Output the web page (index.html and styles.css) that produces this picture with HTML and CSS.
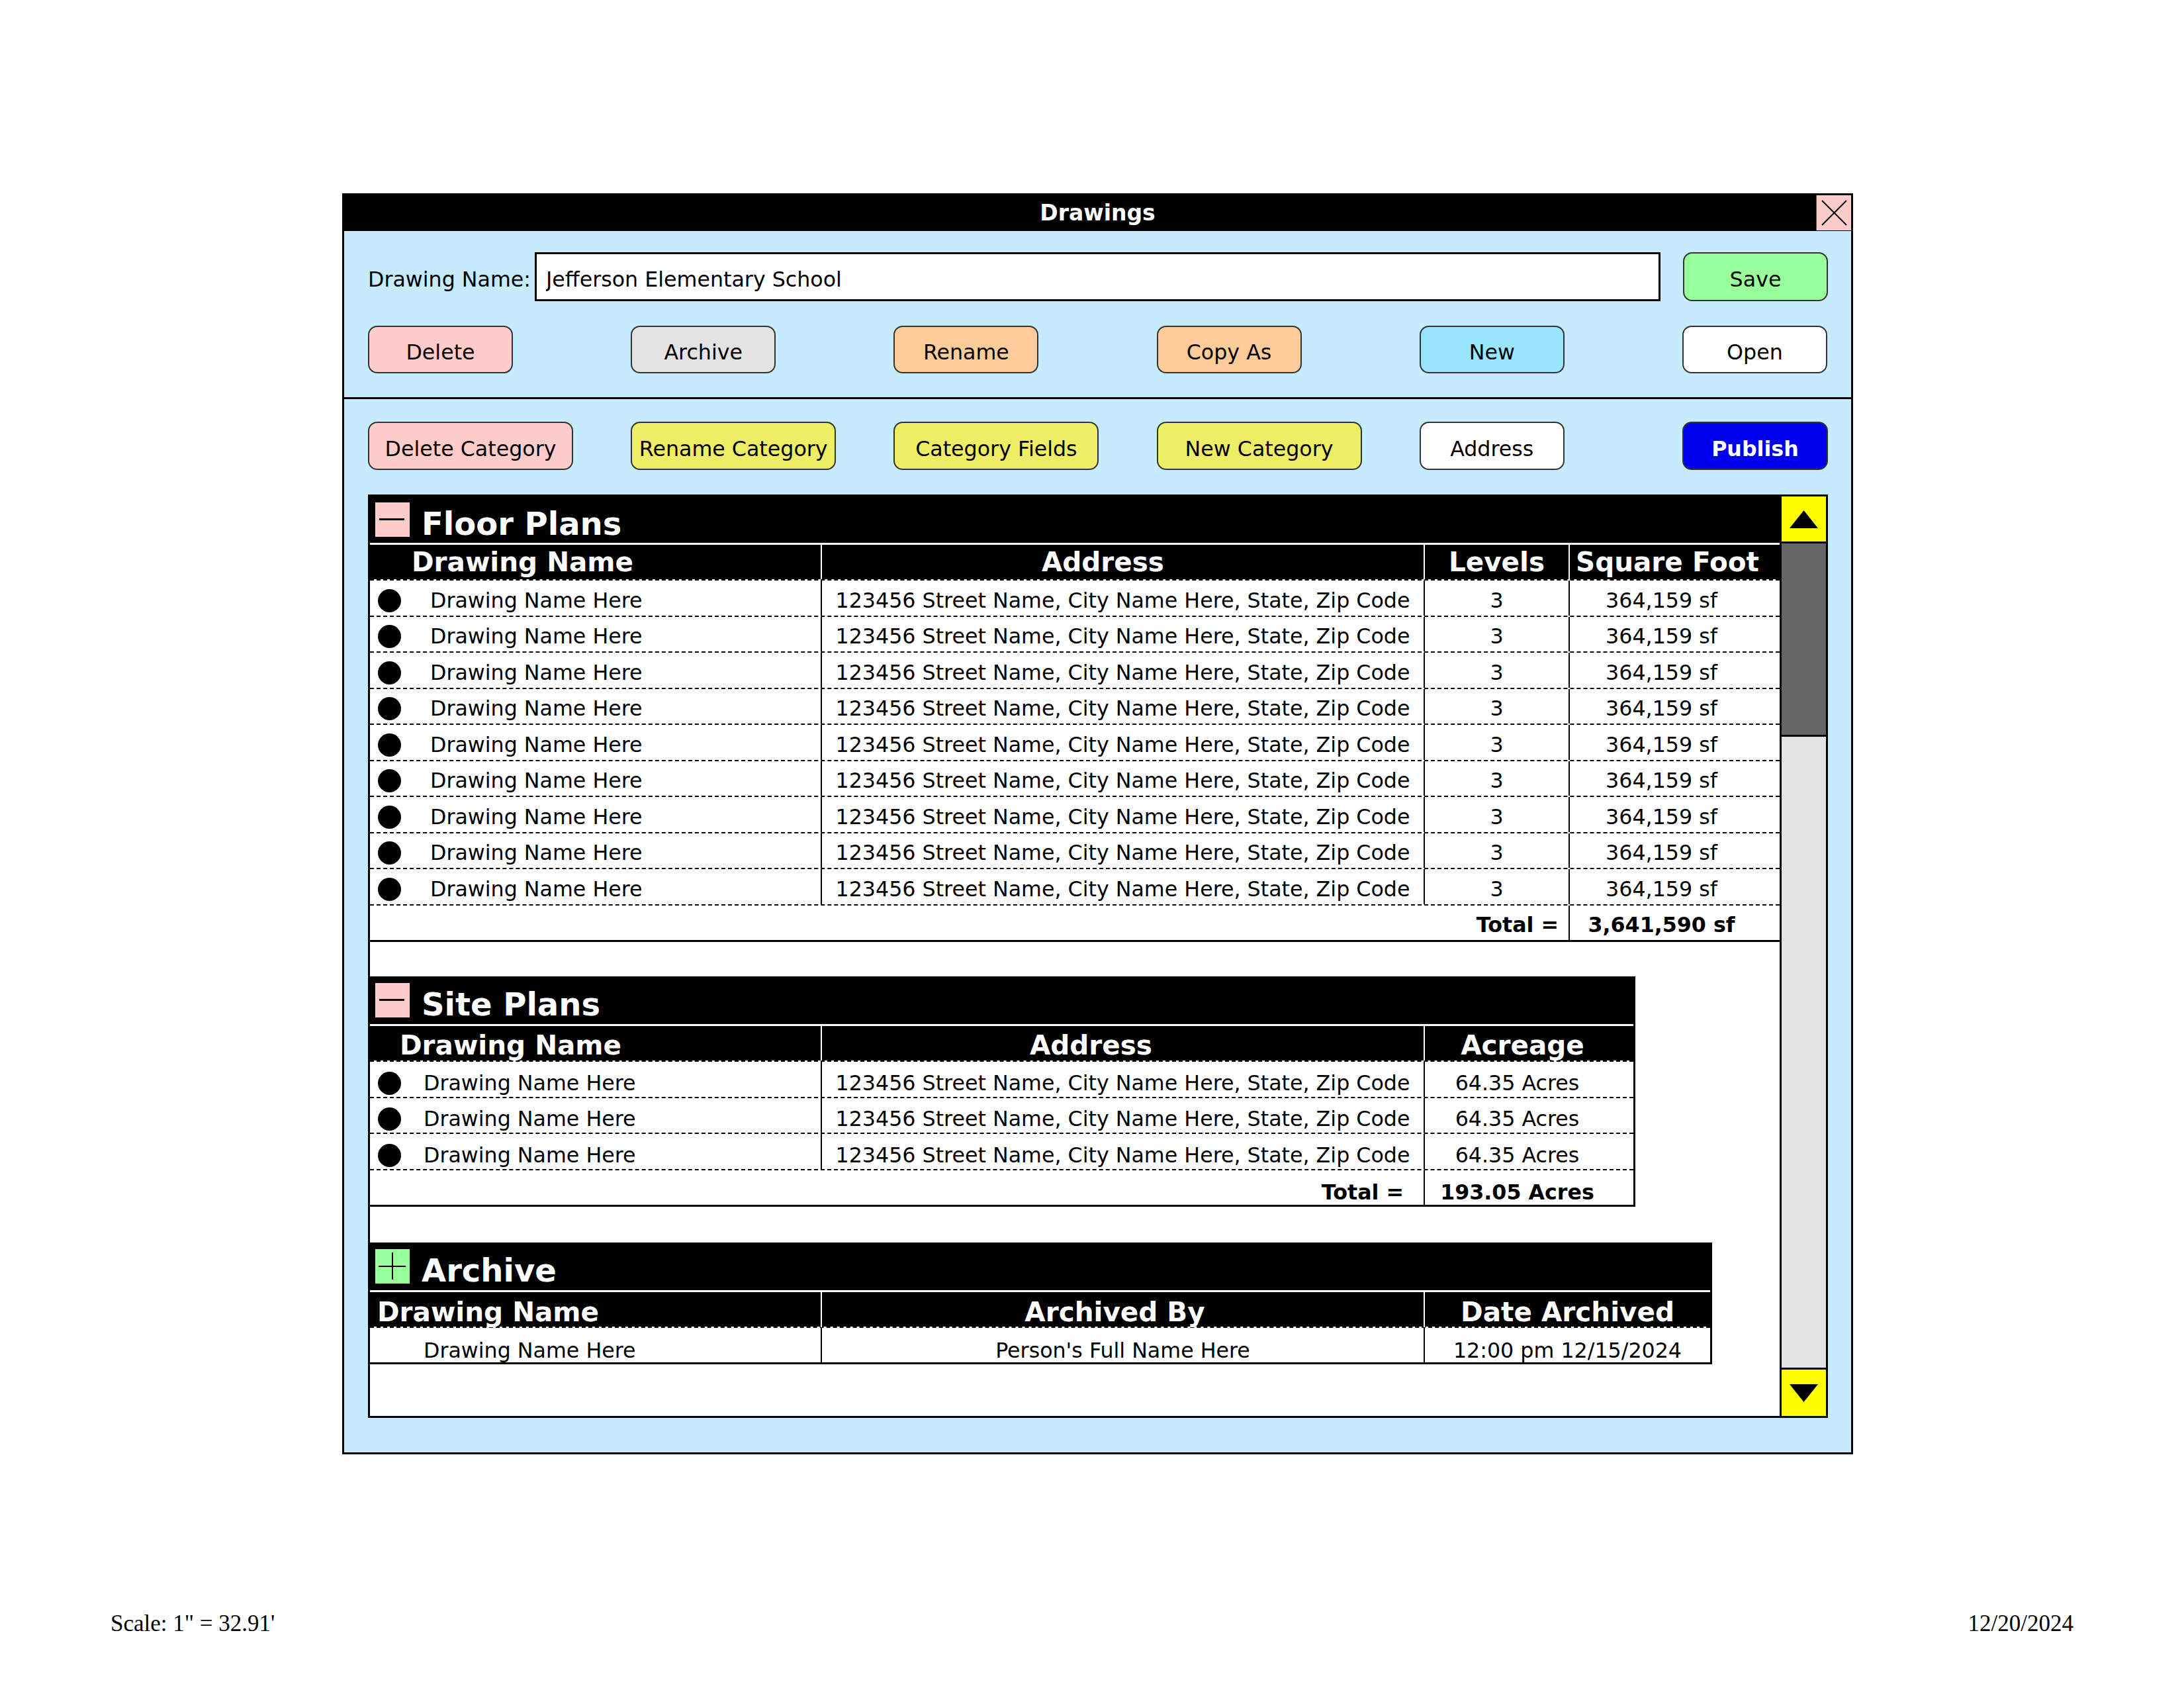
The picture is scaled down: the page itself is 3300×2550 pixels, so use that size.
FILE: index.html
```html
<!DOCTYPE html>
<html>
<head>
  <meta charset="UTF-8">
  <meta name="viewport" content="width=device-width, initial-scale=1.0">
  <title>Drawings</title>
  <link rel="stylesheet" href="styles.css">
</head>
<body>

<div class="sheet">
  <div class="window">
    <div class="titlebar">
      <span></span>
      <span class="titlebar__text">Drawings</span>
      <button class="titlebar__close" aria-label="Close">
        <svg width="53" height="53" viewBox="0 0 53 53"><path d="M8 8 L45 45 M45 8 L8 45" stroke="#000" stroke-width="2" fill="none"/></svg>
      </button>
    </div>

    <div class="toolbar">
      <div class="name-row">
        <label class="name-row__label" for="drawing-name">Drawing Name:</label>
        <input class="name-row__input" id="drawing-name" type="text" value="Jefferson Elementary School">
        <button class="btn btn--green name-row__save">Save</button>
      </div>
      <div class="btn-row">
        <button class="btn btn--pink">Delete</button>
        <button class="btn btn--grey">Archive</button>
        <button class="btn btn--orange">Rename</button>
        <button class="btn btn--orange">Copy As</button>
        <button class="btn btn--blue">New</button>
        <button class="btn btn--white">Open</button>
      </div>
    </div>

    <div class="toolbar toolbar--lower">
      <div class="btn-row">
        <button class="btn btn--wide btn--pink">Delete Category</button>
        <button class="btn btn--wide btn--yellow">Rename Category</button>
        <button class="btn btn--wide btn--yellow">Category Fields</button>
        <button class="btn btn--wide btn--yellow">New Category</button>
        <button class="btn btn--white">Address</button>
        <button class="btn btn--publish">Publish</button>
      </div>

      <div class="panel">
        <div class="panel__body">

          <section class="cat cat--floor">
            <div class="cat__title">
              <svg class="cat__toggle" viewBox="0 0 52 52"><rect width="52" height="52" fill="#ffcccc"/><path d="M6 25.5 H44" stroke="#000" stroke-width="3"/></svg>
              <span class="cat__name">Floor Plans</span>
            </div>
            <div class="cat__table">
              <div class="trow trow--head">
                <div class="cell cell--head-name">Drawing Name</div>
                <div class="cell cell--addr-head">Address</div>
                <div class="cell">Levels</div>
                <div class="cell cell--sf-head">Square Foot</div>
              </div>
              <div class="trow">
                <div class="cell cell--name"><span class="dot"></span>Drawing Name Here</div>
                <div class="cell">123456 Street Name, City Name Here, State, Zip Code</div>
                <div class="cell">3</div>
                <div class="cell cell--sf">364,159 sf</div>
              </div>
              <div class="trow">
                <div class="cell cell--name"><span class="dot"></span>Drawing Name Here</div>
                <div class="cell">123456 Street Name, City Name Here, State, Zip Code</div>
                <div class="cell">3</div>
                <div class="cell cell--sf">364,159 sf</div>
              </div>
              <div class="trow">
                <div class="cell cell--name"><span class="dot"></span>Drawing Name Here</div>
                <div class="cell">123456 Street Name, City Name Here, State, Zip Code</div>
                <div class="cell">3</div>
                <div class="cell cell--sf">364,159 sf</div>
              </div>
              <div class="trow">
                <div class="cell cell--name"><span class="dot"></span>Drawing Name Here</div>
                <div class="cell">123456 Street Name, City Name Here, State, Zip Code</div>
                <div class="cell">3</div>
                <div class="cell cell--sf">364,159 sf</div>
              </div>
              <div class="trow">
                <div class="cell cell--name"><span class="dot"></span>Drawing Name Here</div>
                <div class="cell">123456 Street Name, City Name Here, State, Zip Code</div>
                <div class="cell">3</div>
                <div class="cell cell--sf">364,159 sf</div>
              </div>
              <div class="trow">
                <div class="cell cell--name"><span class="dot"></span>Drawing Name Here</div>
                <div class="cell">123456 Street Name, City Name Here, State, Zip Code</div>
                <div class="cell">3</div>
                <div class="cell cell--sf">364,159 sf</div>
              </div>
              <div class="trow">
                <div class="cell cell--name"><span class="dot"></span>Drawing Name Here</div>
                <div class="cell">123456 Street Name, City Name Here, State, Zip Code</div>
                <div class="cell">3</div>
                <div class="cell cell--sf">364,159 sf</div>
              </div>
              <div class="trow">
                <div class="cell cell--name"><span class="dot"></span>Drawing Name Here</div>
                <div class="cell">123456 Street Name, City Name Here, State, Zip Code</div>
                <div class="cell">3</div>
                <div class="cell cell--sf">364,159 sf</div>
              </div>
              <div class="trow">
                <div class="cell cell--name"><span class="dot"></span>Drawing Name Here</div>
                <div class="cell">123456 Street Name, City Name Here, State, Zip Code</div>
                <div class="cell">3</div>
                <div class="cell cell--sf">364,159 sf</div>
              </div>
              <div class="trow trow--total">
                <div class="cell cell--total-label">Total =</div>
                <div class="cell cell--sf">3,641,590 sf</div>
              </div>
            </div>
          </section>

          <section class="cat cat--site">
            <div class="cat__title">
              <svg class="cat__toggle" viewBox="0 0 52 52"><rect width="52" height="52" fill="#ffcccc"/><path d="M6 25.5 H44" stroke="#000" stroke-width="3"/></svg>
              <span class="cat__name">Site Plans</span>
            </div>
            <div class="cat__table">
              <div class="trow trow--head">
                <div class="cell cell--head-name">Drawing Name</div>
                <div class="cell cell--addr-head">Address</div>
                <div class="cell cell--acre-head">Acreage</div>
              </div>
              <div class="trow">
                <div class="cell cell--name"><span class="dot"></span>Drawing Name Here</div>
                <div class="cell">123456 Street Name, City Name Here, State, Zip Code</div>
                <div class="cell cell--acre">64.35 Acres</div>
              </div>
              <div class="trow">
                <div class="cell cell--name"><span class="dot"></span>Drawing Name Here</div>
                <div class="cell">123456 Street Name, City Name Here, State, Zip Code</div>
                <div class="cell cell--acre">64.35 Acres</div>
              </div>
              <div class="trow">
                <div class="cell cell--name"><span class="dot"></span>Drawing Name Here</div>
                <div class="cell">123456 Street Name, City Name Here, State, Zip Code</div>
                <div class="cell cell--acre">64.35 Acres</div>
              </div>
              <div class="trow trow--total">
                <div class="cell cell--total-label">Total =</div>
                <div class="cell cell--acre">193.05 Acres</div>
              </div>
            </div>
          </section>

          <section class="cat cat--archive">
            <div class="cat__title">
              <svg class="cat__toggle" viewBox="0 0 52 52"><rect width="52" height="52" fill="#99ff99"/><path d="M5 26 H46 M26 5 V46" stroke="#000" stroke-width="2"/></svg>
              <span class="cat__name">Archive</span>
            </div>
            <div class="cat__table">
              <div class="trow trow--head">
                <div class="cell cell--head-name">Drawing Name</div>
                <div class="cell cell--by-head">Archived By</div>
                <div class="cell">Date Archived</div>
              </div>
              <div class="trow trow--last">
                <div class="cell cell--name">Drawing Name Here</div>
                <div class="cell">Person's Full Name Here</div>
                <div class="cell">12:00 pm 12/15/2024</div>
              </div>
            </div>
          </section>

        </div>
        <div class="scrollbar">
          <div class="scrollbar__btn scrollbar__btn--up">
            <svg width="43" height="27" viewBox="0 0 43 27"><polygon points="0,27 21.5,0 43,27" fill="#000"/></svg>
          </div>
          <div class="scrollbar__thumb"></div>
          <div class="scrollbar__track"></div>
          <div class="scrollbar__btn scrollbar__btn--down">
            <svg width="43" height="27" viewBox="0 0 43 27"><polygon points="0,0 43,0 21.5,27" fill="#000"/></svg>
          </div>
        </div>
      </div>
    </div>
  </div>

  <div class="footer">
    <span>Scale: 1" = 32.91'</span>
    <span>12/20/2024</span>
  </div>
</div>

</body>
</html>
```

FILE: styles.css
```css
    html, body {
      margin: 0;
      padding: 0
    }
    *, *:before, *:after {
      box-sizing: border-box;
    }
    body {
      background-color: #ffffff;
      color: #000000;
      font-family: "DejaVu Sans", sans-serif;
      font-size: 31.7px;
    }
    .sheet {
      width: 3300px;
      padding-top: 292px;
    }
    .window {
      background-color: #c5ebfc;
      border: 3px solid #000000;
      margin-left: 517px;
      width: 2283px;
    }

    /* title bar */
    .titlebar {
      align-items: start;
      background-color: #000000;
      display: grid;
      grid-template-columns: 53px 1fr 53px;
      height: 54px;
    }
    .titlebar__text {
      color: #ffffff;
      font-size: 33px;
      font-weight: bold;
      line-height: 54px;
      text-align: center;
    }
    .titlebar__close {
      background-color: #ffcccc;
      border: 0;
      border-left: 1px solid #555555;
      display: block;
      height: 53px;
      padding: 0;
      width: 53px;
    }
    .titlebar__close svg {
      display: block;
    }

    /* toolbars */
    .toolbar {
      border-bottom: 3px solid #000000;
      padding: 32px 35px 36px 36px;
    }
    .toolbar--lower {
      border-bottom: 0;
      padding: 34px 35px 52px 36px;
    }
    .name-row {
      align-items: center;
      display: flex;
      height: 74px;
      margin-bottom: 37px;
    }
    .name-row__label {
      margin-right: 6px;
      padding-top: 8px;
      white-space: nowrap;
    }
    .name-row__input {
      background-color: #ffffff;
      border: 3px solid #000000;
      color: #000000;
      flex: 1;
      font: inherit;
      height: 74px;
      min-width: 0;
      outline: none;
      padding: 8px 14px 0;
    }
    .name-row__save {
      flex: none;
      margin-left: 34px;
      width: 220px;
    }
    .btn-row {
      display: grid;
      grid-template-columns: repeat(5, 397.2px) 220px;
      height: 72px;
    }
    .toolbar--lower .btn-row {
      height: 73px;
      margin-bottom: 37px;
    }
    .btn {
      border: 2px solid #333333;
      border-radius: 14px;
      color: #000000;
      font: inherit;
      height: 100%;
      padding: 8px 0 0;
      width: 219px;
    }
    .btn--wide {
      width: 310px;
    }
    .btn--pink { background-color: #ffcccc; }
    .btn--grey { background-color: #e3e3e3; }
    .btn--orange { background-color: #ffcc99; }
    .btn--blue { background-color: #99e6fc; }
    .btn--white { background-color: #ffffff; }
    .btn--green { background-color: #99ff99; }
    .btn--yellow { background-color: #eeee66; }
    .btn--publish {
      background-color: #0000ee;
      color: #ffffff;
      font-weight: bold;
      width: 220px;
    }

    /* list panel */
    .panel {
      background-color: #ffffff;
      border: 3px solid #000000;
      display: flex;
      height: 1395px;
    }
    .panel__body {
      flex: 1;
      min-width: 0;
    }
    .scrollbar {
      border-left: 3px solid #000000;
      display: flex;
      flex-direction: column;
      width: 70px;
    }
    .scrollbar__btn {
      align-items: center;
      background-color: #ffff00;
      display: flex;
      justify-content: center;
    }
    .scrollbar__btn svg {
      display: block;
    }
    .scrollbar__btn--up {
      border-bottom: 3px solid #000000;
      height: 71px;
    }
    .scrollbar__btn--down {
      border-top: 3px solid #000000;
      height: 73px;
    }
    .scrollbar__thumb {
      background-color: #666666;
      border-bottom: 3px solid #000000;
      height: 292px;
    }
    .scrollbar__track {
      background-color: #e3e3e3;
      flex: 1;
    }

    /* categories */
    .cat--site {
      border-right: 3px solid #000000;
      margin-top: 52px;
      width: 1912px;
    }
    .cat--archive {
      border-right: 3px solid #000000;
      margin-top: 54px;
      width: 2028px;
    }
    .cat__title {
      align-items: center;
      background-color: #000000;
      color: #ffffff;
      display: flex;
      font-size: 48px;
      font-weight: bold;
      gap: 18px;
      height: 72px;
      padding-left: 8px;
      white-space: nowrap;
    }
    .cat--floor .cat__title {
      height: 70px;
    }
    .cat__name {
      padding-top: 12px;
    }
    .cat__toggle {
      display: block;
      flex: none;
      height: 52px;
      width: 52px;
    }
    .cat__table {
      margin-top: 3px;
    }
    .trow {
      border-bottom: 2px dashed #000000;
      display: grid;
      height: 54.5px;
    }
    .cat--floor .trow {
      grid-template-columns: 681px 911px 219px 1fr;
    }
    .cat--site .trow,
    .cat--archive .trow {
      grid-template-columns: 681px 911px 1fr;
    }
    .trow--head {
      background-clip: padding-box;
      background-color: #000000;
      color: #ffffff;
      font-size: 40.5px;
      font-weight: bold;
      height: 54px;
    }
    .trow--total {
      border-bottom: 3px solid #000000;
      font-weight: bold;
      height: 55.5px;
    }
    .trow--last {
      border-bottom: 3px solid #000000;
      height: 55px;
    }
    .cell {
      align-items: center;
      display: flex;
      justify-content: center;
      line-height: 1.1;
      min-width: 0;
      padding-top: 8px;
      white-space: nowrap;
    }
    .trow--head .cell {
      padding-top: 0;
    }
    .cat--site .trow .cell { padding-top: 12px; }
    .cat--site .trow--head .cell { padding-top: 6px; }
    .cat--site .trow--total .cell { padding-top: 16px; }
    .cat--archive .trow .cell { padding-top: 16px; }
    .cat--archive .trow--head .cell { padding-top: 8px; }
    .cell + .cell {
      border-left: 2px solid #000000;
    }
    .trow--head .cell + .cell {
      border-left-color: #ffffff;
    }
    .cell--head-name {
      justify-content: flex-start;
    }
    .cat--floor .cell--head-name { padding-left: 63px; }
    .cat--site .cell--head-name { padding-left: 45px; }
    .cat--archive .cell--head-name { padding-left: 11px; }
    .cell--name {
      gap: 44px;
      justify-content: flex-start;
      padding-left: 12px;
    }
    .cat--site .cell--name { gap: 34px; }
    .cat--archive .cell--name { padding-left: 81px; }
    .dot {
      background-color: #000000;
      border-radius: 50%;
      flex: none;
      height: 35px;
      width: 35px;
    }
    .cat--floor .cell--addr-head { padding-right: 60px; }
    .cat--site .cell--addr-head { padding-right: 96px; }
    .cell--by-head { padding-right: 24px; }
    .cell--sf { padding-right: 40px; }
    .cell--sf-head { padding-right: 22px; }
    .cell--acre { padding-right: 36px; }
    .cell--acre-head { padding-right: 20px; }
    .cell--total-label {
      justify-content: flex-end;
    }
    .cat--floor .cell--total-label {
      grid-column: span 3;
      padding-right: 15px;
    }
    .cat--site .cell--total-label {
      grid-column: span 2;
      padding-right: 30px;
    }

    /* page footer */
    .footer {
      display: flex;
      font-family: "Liberation Serif", serif;
      font-size: 35px;
      justify-content: space-between;
      line-height: 40px;
      margin-top: 236px;
      padding: 0 167px;
    }
```
